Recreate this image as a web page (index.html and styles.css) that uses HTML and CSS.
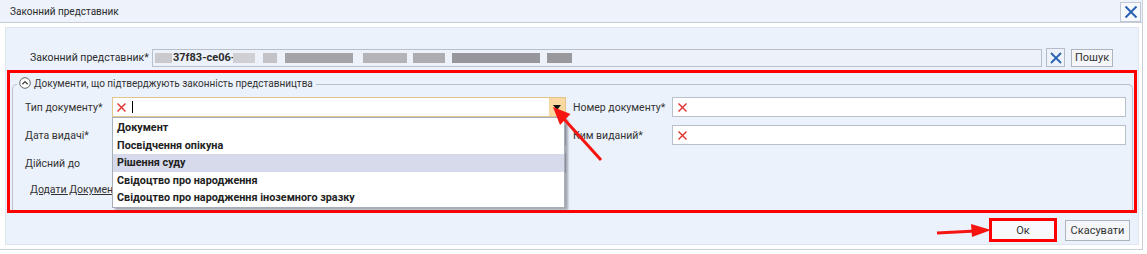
FILE: index.html
```html
<!DOCTYPE html>
<html lang="uk">
<head>
  <meta charset="UTF-8" />
  <title>Законний представник</title>
  <link rel="stylesheet" href="styles.css">
</head>
<body>
  <div class="dialog">
    <header class="titlebar">
      <span class="title">Законний представник</span>
      <button class="close-btn" title="Закрити">
        <svg width="14" height="14" viewBox="0 0 14 14"><path d="M1.5 1.5 12.5 12.5M12.5 1.5 1.5 12.5" stroke="#2a62b3" stroke-width="2" fill="none"/></svg>
      </button>
    </header>

    <div class="panel">
      <div class="rep-row">
        <label class="rep-label">Законний представник*</label>
        <div class="rep-input">
          <span class="mask mask-a"></span>
          <span class="rep-value">37f83-ce06-</span>
          <span class="mask mask-b"></span>
        </div>
        <button class="icon-btn" title="Очистити">
          <svg width="12" height="12" viewBox="0 0 12 12"><path d="M1 1 11 11M11 1 1 11" stroke="#2a62b3" stroke-width="1.8" fill="none"/></svg>
        </button>
        <button class="btn search-btn">Пошук</button>
      </div>

      <!-- red highlight round the documents block -->
      <div class="highlight">
        <fieldset class="docs">
          <legend>
            <svg class="collapse-icon" width="12" height="12" viewBox="0 0 12 12"><circle cx="6" cy="6" r="5.3" stroke="#666" fill="#fff"/><path d="M3.4 7.2 6 4.6 8.6 7.2" stroke="#444" stroke-width="1.3" fill="none"/></svg>Документи, що підтверджують законність представництва
          </legend>

          <div class="doc-grid">
            <span class="label">Тип документу*</span>
            <div class="combo">
              <svg class="req-x" width="9" height="9" viewBox="0 0 9 9"><path d="M0.5 0.5 8.5 8.5M8.5 0.5 0.5 8.5" stroke="#e0322c" stroke-width="1.4" fill="none"/></svg>
              <span class="caret"></span>
              <span class="combo-btn"><span class="tri"></span></span>
              <ul class="dropdown">
                <li>Документ</li>
                <li>Посвідчення опікуна</li>
                <li class="active">Рішення суду</li>
                <li>Свідоцтво про народження</li>
                <li>Свідоцтво про народження іноземного зразку</li>
              </ul>
            </div>
            <span class="label label-right">Номер документу*</span>
            <div class="field">
              <svg class="req-x" width="9" height="9" viewBox="0 0 9 9"><path d="M0.5 0.5 8.5 8.5M8.5 0.5 0.5 8.5" stroke="#e0322c" stroke-width="1.4" fill="none"/></svg>
            </div>

            <span class="label">Дата видачі*</span>
            <div class="field"></div>
            <span class="label label-right">Ким виданий*</span>
            <div class="field">
              <svg class="req-x" width="9" height="9" viewBox="0 0 9 9"><path d="M0.5 0.5 8.5 8.5M8.5 0.5 0.5 8.5" stroke="#e0322c" stroke-width="1.4" fill="none"/></svg>
            </div>

            <span class="label">Дійсний до</span>
            <div class="field"></div>
          </div>

          <a class="add-link" href="#">Додати Документ</a>
        </fieldset>
      </div>

      <div class="footer">
        <button class="btn ok-btn">Ок</button>
        <button class="btn cancel-btn">Скасувати</button>
      </div>
    </div>

    <!-- annotation arrows -->
    <svg class="arrows" width="1147" height="254" viewBox="0 0 1147 254">
      <path d="M601 160 564 119" stroke="#f5140f" stroke-width="3" fill="none"/>
      <polygon points="553,107 570.5,114 560,125" fill="#f5140f"/>
      <path d="M937 233 976 231" stroke="#f5140f" stroke-width="3" fill="none"/>
      <polygon points="991,230 971,224 972,237" fill="#f5140f"/>
    </svg>
  </div>
</body>
</html>
```

FILE: styles.css
```css
:root {
  --panel: #ecf2fc;
  --line: #b8c0cc;
  --text: #2b2b2b;
  --red: #ff0000;
}

* {
  box-sizing: border-box;
}

body {
  margin: 0;
  font-family: Roboto, "Noto Sans", sans-serif;
  font-size: 10.5px;
  color: var(--text);
  background: #fff;
}

.dialog {
  position: relative;
  width: 1143px;
  height: 250px;
  background: #fff;
  border-right: 1px solid #c9cfd8;
  border-bottom: 1px solid #c9cfd8;
  white-space: nowrap;
}

.titlebar {
  height: 23px;
  display: flex;
  align-items: center;
  justify-content: space-between;
  padding: 0 1px 0 10px;
  background: #edf2fb;
  border-bottom: 1px solid #c6ccd5;
}

.title {
  font-size: 10px;
}

.close-btn {
  width: 21px;
  height: 20px;
  margin-top: 1px;
  padding: 0;
  display: flex;
  align-items: center;
  justify-content: center;
  background: #f6f8fc;
  border: 1px solid #c1c8d4;
}

.panel {
  margin: 4px 3px 0 5px;
  height: 218px;
  background: var(--panel);
  border: 1px solid #dfe5ee;
}

.rep-row {
  display: flex;
  align-items: center;
  height: 19px;
  margin-top: 20px;
  padding: 0 25px 0 24px;
}

.rep-label {
  width: 122px;
  flex: none;
}

.rep-input {
  flex: 1;
  height: 18px;
  display: flex;
  align-items: center;
  padding-left: 2px;
  background: #edf2fa;
  border: 1px solid var(--line);
}

.rep-value {
  font-weight: bold;
  font-size: 11px;
  width: 60px;
}

.mask {
  height: 10px;
  flex: none;
}

.mask-a {
  width: 17px;
  margin-right: 1px;
  background: #c9c9ce;
}

.mask-b {
  width: 339px;
  background: linear-gradient(to right,
    #cfcfd4 0 22px, transparent 22px 30px,
    #c2c2c7 30px 44px, transparent 44px 52px,
    #a3a3a8 52px 120px, transparent 120px 130px,
    #b3b3b8 130px 174px, transparent 174px 180px,
    #acacb1 180px 212px, transparent 212px 219px,
    #96969c 219px 307px, transparent 307px 314px,
    #98989d 314px 339px);
}

.icon-btn {
  width: 19px;
  height: 19px;
  margin-left: 4px;
  padding: 0;
  display: flex;
  align-items: center;
  justify-content: center;
  background: #eef3fb;
  border: 1px solid #b5bcc8;
}

.btn {
  font-family: inherit;
  font-size: 11px;
  color: #333;
  background: #f4f6f9;
  border: 1px solid #adb4be;
  padding: 0;
}

.search-btn {
  width: 42px;
  height: 18px;
  margin-left: 6px;
}

.highlight {
  position: relative;
  height: 143px;
  margin: 3px 1px 0 1px;
  border: 3px solid var(--red);
}

.docs {
  margin: 4px 1px 0 2px;
  padding: 0;
  height: 133px;
  border: 1px solid var(--line);
  border-bottom: none;
  border-radius: 5px 5px 0 0;
}

.docs legend {
  margin-left: 4px;
  padding: 0 3px 0 2px;
  font-size: 10px;
  line-height: 14px;
  color: #333;
}

.collapse-icon {
  vertical-align: -2px;
  margin-right: 3px;
}

.doc-grid {
  display: grid;
  grid-template-columns: 87px 454px 106px 454px;
  grid-auto-rows: 20px;
  row-gap: 8px;
  margin: 6px 0 0 12px;
}

.label {
  align-self: center;
  color: #333;
}

.label-right {
  padding-left: 7px;
}

.field,
.combo {
  display: flex;
  align-items: center;
  background: #fff;
  border: 1px solid var(--line);
}

.field .req-x {
  margin-left: 5px;
}

.combo {
  position: relative;
  border-color: #e2c48c;
}

.combo .req-x {
  margin-left: 4px;
}

.caret {
  width: 1px;
  height: 12px;
  margin-left: 6px;
  background: #000;
}

.combo-btn {
  margin-left: auto;
  width: 16px;
  height: 18px;
  display: flex;
  align-items: center;
  justify-content: center;
  background: #f9d99f;
}

.tri {
  width: 0;
  height: 0;
  border-left: 4px solid transparent;
  border-right: 4px solid transparent;
  border-top: 5px solid #111;
}

.dropdown {
  position: absolute;
  top: calc(100% + 1px);
  left: -1px;
  width: 453px;
  margin: 0;
  padding: 1px 0 0;
  list-style: none;
  background: #fff;
  border: 1px solid #a8aeb8;
  box-shadow: 3px 2px 2px rgba(80, 80, 90, 0.45);
  z-index: 10;
}

.dropdown li {
  height: 17.5px;
  line-height: 17.5px;
  padding-left: 4px;
  font-size: 10.8px;
  font-weight: bold;
  color: #222;
}

.dropdown li.active {
  background: #d7daea;
}

.add-link {
  display: block;
  width: max-content;
  margin: 9px 0 0 17px;
  line-height: 16px;
  color: #333;
}

.footer {
  height: 31px;
  display: flex;
  align-items: center;
  justify-content: flex-end;
  gap: 8px;
  padding: 3px 8px 0 0;
}

.ok-btn {
  width: 68px;
  height: 24px;
  border: 3px solid var(--red);
  background: #f7f9fc;
}

.cancel-btn {
  width: 65px;
  height: 21px;
}

.arrows {
  position: absolute;
  top: 0;
  left: 0;
  pointer-events: none;
  z-index: 20;
}
```
